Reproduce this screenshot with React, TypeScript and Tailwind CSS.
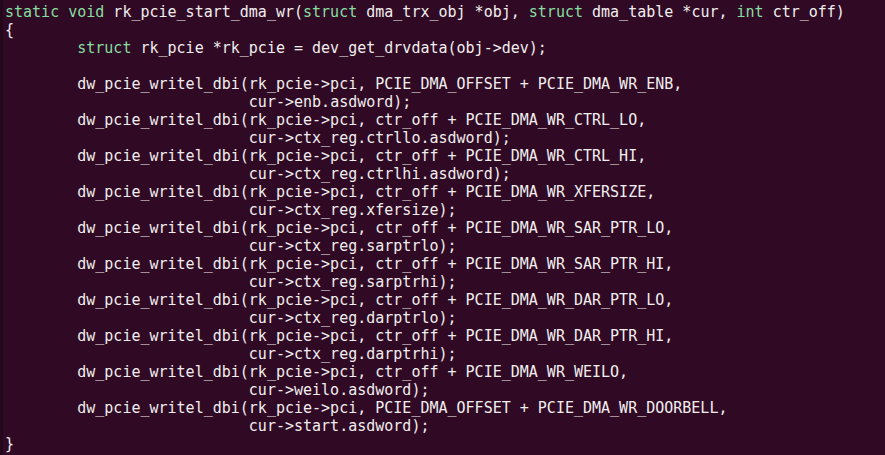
const KW = new Set(["static", "void", "struct", "int"]);

const lines = [
  "static void rk_pcie_start_dma_wr(struct dma_trx_obj *obj, struct dma_table *cur, int ctr_off)",
  "{",
  "        struct rk_pcie *rk_pcie = dev_get_drvdata(obj->dev);",
  "",
  "        dw_pcie_writel_dbi(rk_pcie->pci, PCIE_DMA_OFFSET + PCIE_DMA_WR_ENB,",
  "                           cur->enb.asdword);",
  "        dw_pcie_writel_dbi(rk_pcie->pci, ctr_off + PCIE_DMA_WR_CTRL_LO,",
  "                           cur->ctx_reg.ctrllo.asdword);",
  "        dw_pcie_writel_dbi(rk_pcie->pci, ctr_off + PCIE_DMA_WR_CTRL_HI,",
  "                           cur->ctx_reg.ctrlhi.asdword);",
  "        dw_pcie_writel_dbi(rk_pcie->pci, ctr_off + PCIE_DMA_WR_XFERSIZE,",
  "                           cur->ctx_reg.xfersize);",
  "        dw_pcie_writel_dbi(rk_pcie->pci, ctr_off + PCIE_DMA_WR_SAR_PTR_LO,",
  "                           cur->ctx_reg.sarptrlo);",
  "        dw_pcie_writel_dbi(rk_pcie->pci, ctr_off + PCIE_DMA_WR_SAR_PTR_HI,",
  "                           cur->ctx_reg.sarptrhi);",
  "        dw_pcie_writel_dbi(rk_pcie->pci, ctr_off + PCIE_DMA_WR_DAR_PTR_LO,",
  "                           cur->ctx_reg.darptrlo);",
  "        dw_pcie_writel_dbi(rk_pcie->pci, ctr_off + PCIE_DMA_WR_DAR_PTR_HI,",
  "                           cur->ctx_reg.darptrhi);",
  "        dw_pcie_writel_dbi(rk_pcie->pci, ctr_off + PCIE_DMA_WR_WEILO,",
  "                           cur->weilo.asdword);",
  "        dw_pcie_writel_dbi(rk_pcie->pci, PCIE_DMA_OFFSET + PCIE_DMA_WR_DOORBELL,",
  "                           cur->start.asdword);",
  "}",
];

const CodeLine = ({ text }: { text: string }) => {
  const parts = text.split(/(\b[a-z]+\b)/);
  return (
    <div className="h-[18px] whitespace-pre">
      {parts.map((p, i) =>
        KW.has(p) ? (
          <span key={i} className="text-[#86dfa0]">
            {p}
          </span>
        ) : (
          <span key={i}>{p}</span>
        )
      )}
      {text === "" ? " " : null}
    </div>
  );
};

export default function App() {
  return (
    <div className="w-[885px] h-[455px] overflow-hidden bg-[#300a24] border-l-[3px] border-[#25071b]">
      <div className="pl-[2px] pt-[3px] font-['DejaVu_Sans_Mono',monospace] text-[15px] leading-[18px] text-[#f0eeee]">
        {lines.map((l, i) => (
          <CodeLine key={i} text={l} />
        ))}
      </div>
    </div>
  );
}
